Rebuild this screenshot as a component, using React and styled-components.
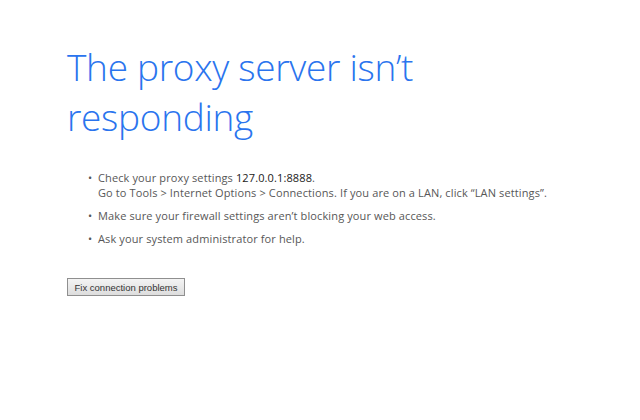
import React from "react";
import styled, { createGlobalStyle } from "styled-components";

const GlobalStyle = createGlobalStyle`
  html, body {
    margin: 0;
    padding: 0;
    background: #fff;
  }
  body {
    font-family: "Open Sans", "Liberation Sans", sans-serif;
  }
`;

const Page = styled.div`
  width: 640px;
  height: 420px;
  box-sizing: border-box;
  padding: 42px 0 0 67px;
  background: #fff;
`;

const Title = styled.h1`
  margin: 0;
  width: 420px;
  font-family: "Open Sans", sans-serif;
  font-weight: 300;
  font-size: 37px;
  line-height: 50px;
  letter-spacing: -0.3px;
  color: #2a74ee;
`;

const List = styled.ul`
  margin: 28px 0 0 0;
  padding: 0 0 0 31px;
  list-style: none;
  display: flex;
  flex-direction: column;
  gap: 8px;
`;

const Item = styled.li`
  position: relative;
  font-size: 11px;
  line-height: 15px;
  letter-spacing: 0.12px;
  color: #575757;

  &::before {
    content: "•";
    position: absolute;
    left: -10px;
    top: 0;
    color: #555;
  }
`;

const Strong = styled.span`
  color: #1a1a1a;
`;

const Button = styled.button`
  display: block;
  margin-top: 32px;
  height: 18px;
  width: 118px;
  padding: 0;
  white-space: nowrap;
  font-family: "Liberation Sans", Arial, sans-serif;
  font-size: 9.5px;
  color: #333;
  background: linear-gradient(#f4f4f4, #dddddd);
  border: 1px solid #8f8f8f;
  border-radius: 0;
`;

export default function App() {
  return (
    <Page>
      <GlobalStyle />
      <Title>The proxy server isn’t responding</Title>
      <List>
        <Item>
          Check your proxy settings <Strong>127.0.0.1:8888</Strong>.
          <br />
          Go to Tools &gt; Internet Options &gt; Connections. If you are on a
          LAN, click “LAN settings”.
        </Item>
        <Item>Make sure your firewall settings aren’t blocking your web access.</Item>
        <Item>Ask your system administrator for help.</Item>
      </List>
      <Button>Fix connection problems</Button>
    </Page>
  );
}
